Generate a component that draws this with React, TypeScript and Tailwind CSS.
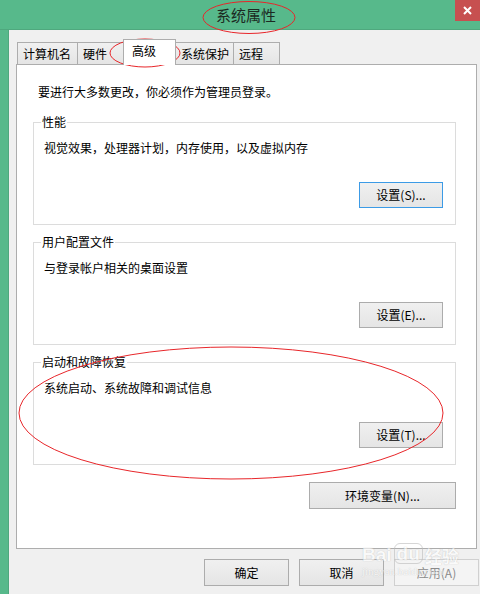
// System Properties dialog (Advanced tab)
const font = { fontFamily: '"Noto Sans CJK SC", "Noto Sans", sans-serif' };

function WinButton({
  label,
  width = "w-[84px]",
  height = "h-[26px]",
  focused = false,
  disabled = false,
}: {
  label: string;
  width?: string;
  height?: string;
  focused?: boolean;
  disabled?: boolean;
}) {
  const border = focused
    ? "border-[#3c9be6]"
    : disabled
      ? "border-[#d0d0d0]"
      : "border-[#acacac]";
  const bg = disabled
    ? "bg-[#f4f4f4] text-[#8a8a8a]"
    : "bg-gradient-to-b from-[#f0f0f0] to-[#e5e5e5] text-black";
  return (
    <button
      className={`${width} ${height} border ${border} ${bg} text-[12px] leading-none flex items-center justify-center`}
    >
      {label}
    </button>
  );
}

function Group({
  title,
  text,
  button,
  focused = false,
}: {
  title: string;
  text: string;
  button: string;
  focused?: boolean;
}) {
  return (
    <fieldset className="w-[423px] border border-[#dcdcdc] px-[10px] pb-[16px]">
      <legend className="ml-[-3px] px-[1px] text-[12px] leading-[16px] text-black">
        {title}
      </legend>
      <p className="mt-[10px] text-[12px] leading-[16px] text-black">{text}</p>
      <div className="mt-[26px] flex justify-end pr-[2px]">
        <WinButton label={button} focused={focused} />
      </div>
    </fieldset>
  );
}

export default function App() {
  const tabs = [
    { name: "计算机名", w: "w-[61px]" },
    { name: "硬件", w: "w-[47px]" },
    { name: "高级", w: "w-[53px]", active: true },
    { name: "系统保护", w: "w-[59px]" },
    { name: "远程", w: "w-[47px]" },
  ];

  return (
    <div
      className="relative w-[480px] h-[594px] overflow-hidden bg-[#57b98b] flex flex-col"
      style={font}
    >
      {/* title bar */}
      <div className="h-[30px] flex items-start border-b border-[#4fa87e]">
        <div className="flex-1 pl-[216px] pt-[5px] text-[15px] leading-[20px] text-[#1c2a22]">
          系统属性
        </div>
        <div className="w-[25px] h-[21px] bg-[#c75050] flex items-center justify-center">
          <svg width="9" height="9" viewBox="0 0 9 9">
            <path d="M1 1L8 8M8 1L1 8" stroke="white" strokeWidth="2" />
          </svg>
        </div>
      </div>

      {/* client area */}
      <div className="flex-1 ml-[8px] bg-[#f0f0f0] pl-[7px] pt-[9px] border-l border-[#4fa87e]">
        <div className="h-[25px] flex items-end pl-[1px]">
          {tabs.map((t, i) =>
            t.active ? (
              <div
                key={t.name}
                className={`${t.w} h-[26px] mb-[-1px] -ml-px relative z-10 bg-white border-t border-l border-r border-[#adadad] text-[12px] leading-none pl-[8px] pt-[5px] text-black`}
              >
                {t.name}
              </div>
            ) : (
              <div
                key={t.name}
                className={`${t.w} h-[22px] ${i === 0 ? "" : "-ml-px"} bg-gradient-to-b from-[#f0f0f0] to-[#e5e5e5] border-t border-l border-r border-[#adadad] text-[12px] leading-none flex items-center pl-[5px] text-black`}
              >
                {t.name}
              </div>
            ),
          )}
        </div>

        <div className="w-[461px] h-[485px] border border-[#adadad] bg-white pl-[16px] pt-[19px]">
          <p className="ml-[5px] text-[12px] leading-[16px] text-black">
            要进行大多数更改，你必须作为管理员登录。
          </p>
          <div className="mt-[14px] flex flex-col gap-[9px]">
            <Group
              title="性能"
              text="视觉效果，处理器计划，内存使用，以及虚拟内存"
              button="设置(S)..."
              focused
            />
            <Group
              title="用户配置文件"
              text="与登录帐户相关的桌面设置"
              button="设置(E)..."
            />
            <Group
              title="启动和故障恢复"
              text="系统启动、系统故障和调试信息"
              button="设置(T)..."
            />
          </div>
          <div className="w-[423px] mt-[17px] flex justify-end">
            <WinButton label="环境变量(N)..." width="w-[147px]" height="h-[27px]" />
          </div>
        </div>

        <div className="mt-[10px] ml-[188px] flex gap-[10px]">
          <WinButton label="确定" width="w-[85px]" height="h-[27px]" />
          <WinButton label="取消" width="w-[85px]" height="h-[27px]" />
          <WinButton label="应用(A)" width="w-[85px]" height="h-[27px]" disabled />
        </div>
      </div>

      {/* watermark */}
      <div className="absolute left-[362px] top-[543px] text-white opacity-60 pointer-events-none [text-shadow:0_0_1px_#9a9a9a]">
        <div className="flex items-end gap-[2px] text-[19px] leading-none font-bold" style={{ fontFamily: '"Liberation Sans", sans-serif' }}>
          <span>Bai</span>
          <span className="rounded-[6px] border border-[#bbb] px-[2px]">du</span>
          <span className="text-[17px]" style={font}>经验</span>
        </div>
        <div className="text-[11px] leading-none mt-[2px]" style={{ fontFamily: '"Liberation Serif", serif' }}>
          jingyan.baidu.com
        </div>
      </div>

      {/* red annotation ellipses */}
      <svg className="absolute inset-0 pointer-events-none" width="480" height="594">
        <g fill="none" stroke="#e8262a" strokeWidth="1">
          <ellipse cx="249" cy="17.5" rx="46" ry="16" />
          <ellipse cx="145" cy="53" rx="35" ry="14" />
          <ellipse cx="231" cy="413" rx="212" ry="66" />
        </g>
      </svg>
    </div>
  );
}
